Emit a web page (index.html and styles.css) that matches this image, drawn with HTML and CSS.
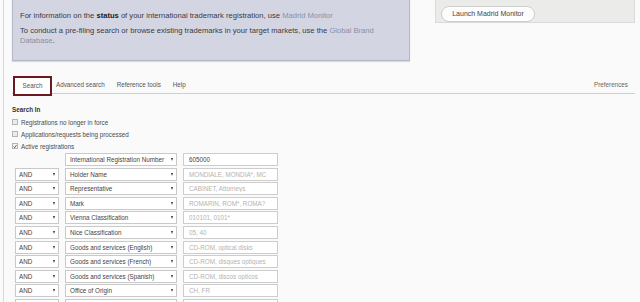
FILE: index.html
```html
<!DOCTYPE html>
<html>
<head>
    <title>Global Brand Database - Search</title>
    <link rel="stylesheet" href="styles.css">
</head>
<body>
<div class="page">
    <div class="top">
        <div class="info-box">
            <p>For information on the <b>status</b> of your international trademark registration, use <a href="#">Madrid Monitor</a></p>
            <p>To conduct a pre-filing search or browse existing trademarks in your target markets, use the <a href="#">Global Brand Database</a>.</p>
        </div>
        <div class="monitor-box">
            <button class="pill">Launch Madrid Monitor</button>
        </div>
    </div>

    <div class="tabs">
        <a class="tab active" href="#">Search</a>
        <a class="tab" href="#">Advanced search</a>
        <a class="tab" href="#">Reference tools</a>
        <a class="tab" href="#">Help</a>
        <a class="tab prefs" href="#">Preferences</a>
    </div>

    <div class="search-in">
        <div class="label-bold">Search In</div>
        <label class="check"><span class="cb"></span>Registrations no longer in force</label>
        <label class="check"><span class="cb"></span>Applications/requests being processed</label>
        <label class="check"><span class="cb checked"><svg viewBox="0 0 8 8" width="7" height="7"><path d="M1 4.2 L3.1 6.3 L7 1.4" fill="none" stroke="#333" stroke-width="1.6"/></svg></span>Active registrations</label>
    </div>

    <div class="criteria">
        <div class="row">
            <span class="spacer"></span>
            <div class="sel field"><select><option>International Registration Number</option></select></div>
            <input type="text" value="605000">
        </div>
        <div class="row">
            <div class="sel op"><select><option>AND</option></select></div>
            <div class="sel field"><select><option>Holder Name</option></select></div>
            <input type="text" placeholder="MONDIALE, MONDIA*, MC">
        </div>
        <div class="row">
            <div class="sel op"><select><option>AND</option></select></div>
            <div class="sel field"><select><option>Representative</option></select></div>
            <input type="text" placeholder="CABINET, Attorneys">
        </div>
        <div class="row">
            <div class="sel op"><select><option>AND</option></select></div>
            <div class="sel field"><select><option>Mark</option></select></div>
            <input type="text" placeholder="ROMARIN, ROM*, ROMA?">
        </div>
        <div class="row">
            <div class="sel op"><select><option>AND</option></select></div>
            <div class="sel field"><select><option>Vienna Classification</option></select></div>
            <input type="text" placeholder="010101, 0101*">
        </div>
        <div class="row">
            <div class="sel op"><select><option>AND</option></select></div>
            <div class="sel field"><select><option>Nice Classification</option></select></div>
            <input type="text" placeholder="05, 40">
        </div>
        <div class="row">
            <div class="sel op"><select><option>AND</option></select></div>
            <div class="sel field"><select><option>Goods and services (English)</option></select></div>
            <input type="text" placeholder="CD-ROM, optical disks">
        </div>
        <div class="row">
            <div class="sel op"><select><option>AND</option></select></div>
            <div class="sel field"><select><option>Goods and services (French)</option></select></div>
            <input type="text" placeholder="CD-ROM, disques optiques">
        </div>
        <div class="row">
            <div class="sel op"><select><option>AND</option></select></div>
            <div class="sel field"><select><option>Goods and services (Spanish)</option></select></div>
            <input type="text" placeholder="CD-ROM, discos opticos">
        </div>
        <div class="row">
            <div class="sel op"><select><option>AND</option></select></div>
            <div class="sel field"><select><option>Office of Origin</option></select></div>
            <input type="text" placeholder="CH, FR">
        </div>
        <div class="row">
            <div class="sel op"><select><option>AND</option></select></div>
            <div class="sel field"><select><option>Designation</option></select></div>
            <input type="text" placeholder="CH, FR">
        </div>
    </div>
</div>
</body>
</html>
```

FILE: styles.css
```css
body { margin: 0; background: #fafafa; font-family: "Liberation Sans", Arial, sans-serif; color: #444; overflow: hidden; height: 302px; }
.page { margin-left: 3px; border-left: 1px solid #d9d9d9; height: 302px; overflow: hidden; padding: 0 5px 0 8px; }

.top { display: flex; gap: 25px; align-items: flex-start; margin-top: -20px; }
.info-box { box-sizing: border-box; width: 398px; background: #d4d5e3; border: 1px solid #b6b7c5; box-shadow: 0 1px 1px rgba(0,0,0,.12); padding: 30px 14px 14px 7px; font-size: 7.6px; line-height: 10px; color: #3a3a40; }
.info-box p { margin: 0 0 5px; }
.info-box p:last-child { margin-bottom: 0; }
.info-box b { color: #222; }
.info-box a { color: #8a8ea6; text-decoration: none; }
.monitor-box { flex: 1; box-sizing: border-box; height: 43px; background: #ebebea; border: 1px solid #dadada; padding: 21px 0 0 5px; }
.pill { box-sizing: border-box; width: 94px; height: 16px; padding: 0; border: 1px solid #cfcfcf; border-radius: 8px; background: #fdfdfd; font-family: inherit; font-size: 7px; color: #444; }

.tabs { display: flex; align-items: flex-start; height: 23px; margin-top: 9px; border-bottom: 1px solid #cfcfcf; }
.tab { font-size: 6.3px; line-height: 14px; padding: 8px 6px 0; color: #555; text-decoration: none; }
.tab.active { box-sizing: border-box; height: 16px; width: 35px; margin: 8px 0 0 3px; padding: 0; line-height: 16px; text-align: center; background: #fff; outline: 2px solid #6b1a20; }
.tab.prefs { margin-left: auto; padding-right: 7px; color: #666; }

.search-in { margin-top: 11px; font-size: 6.3px; }
.label-bold { font-weight: bold; line-height: 10px; margin-bottom: 1px; color: #333; }
.check { display: flex; align-items: center; height: 12px; color: #4a4a4a; }
.cb { box-sizing: border-box; width: 6px; height: 6px; border: 1px solid #b5b5b5; background: #ececec; margin-right: 3px; display: flex; align-items: center; justify-content: center; }
.cb.checked { background: #f4f4f4; }

.criteria { margin-top: 1px; padding-left: 3px; }
.row { display: flex; gap: 6px; height: 13px; margin-bottom: 1.6px; }
.spacer { width: 44px; }
.sel { position: relative; height: 13px; }
.sel select { display: block; -webkit-appearance: none; appearance: none; box-sizing: border-box; height: 13px; width: 100%; margin: 0; border: 1px solid #c9c9c9; border-radius: 0; background: #fff; padding: 0 3px; font-family: inherit; font-size: 6.3px; line-height: 11px; color: #444; }
.sel::after { content: ""; position: absolute; right: 4px; top: 5px; border-left: 1.5px solid transparent; border-right: 1.5px solid transparent; border-top: 3px solid #333; }
.op { width: 44px; }
.field { width: 112px; }
.field select { padding-left: 4px; }
.row input { display: block; box-sizing: border-box; width: 95px; height: 13px; margin: 0; border: 1px solid #cdcdcd; background: #fff; padding: 0 5px; font-family: inherit; font-size: 6.3px; color: #444; }
.row input::placeholder { color: #b3b3b3; }
```
